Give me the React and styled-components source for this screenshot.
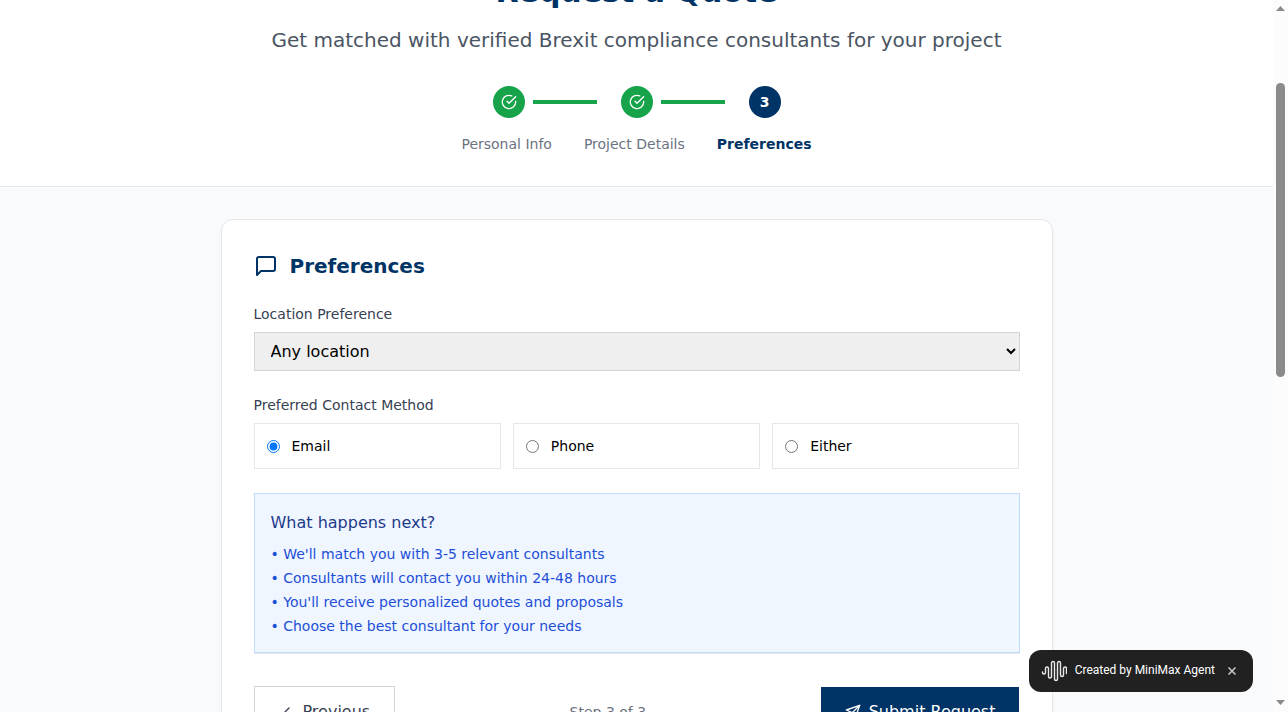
import React, { useState } from "react";
import styled, { createGlobalStyle } from "styled-components";

const GlobalStyle = createGlobalStyle`
  *, *::before, *::after { box-sizing: border-box; }
  body {
    margin: 0;
    background: #f9fafb;
    color: #000;
    font-family: "DejaVu Sans", sans-serif;
    font-size: 16px;
    line-height: 26px;
  }
  h1, h2, h3, p, ul { margin: 0; padding: 0; }
  ul { list-style: none; }
  button, select, input { font: inherit; }
`;

const Shell = styled.div`
  display: grid;
  grid-template-columns: minmax(0, 1fr) 15px;
  height: 100vh;
  overflow: hidden;
`;

const Viewport = styled.div`
  min-width: 0;
  overflow: hidden;
  background: #f9fafb;
`;

const Track = styled.div`
  display: flex;
  flex-direction: column;
  align-items: center;
  padding: 6px 0 7px;
  background: #fcfcfc;
`;

const Arrow = styled.svg`
  display: block;
  width: 9px;
  height: 5px;
  fill: #8b8b8b;
`;

const Rail = styled.div`
  flex: 1;
  width: 9px;
  padding: 72px 0;
`;

const Thumb = styled.div`
  height: 54%;
  border-radius: 5px;
  background: #8b8b8b;
`;

const Header = styled.header`
  margin-top: -58px;
  padding: 32px;
  background: #fff;
  border-bottom: 1px solid #e5e7eb;
  text-align: center;
`;

const Title = styled.h1`
  margin-bottom: 16px;
  color: #003366;
  font-size: 30px;
  line-height: 36px;
`;

const Subtitle = styled.p`
  color: #4b5563;
  font-size: 20px;
  line-height: 28px;
`;

const Steps = styled.div`
  display: flex;
  justify-content: center;
  gap: 16px;
  margin-top: 32px;
`;

const Step = styled.div`
  display: flex;
  align-items: center;
  gap: 8px;
  padding-right: ${(p) => (p.$last ? "0" : "8px")};
`;

const StepCircle = styled.span`
  display: flex;
  align-items: center;
  justify-content: center;
  width: 32px;
  height: 32px;
  border-radius: 50%;
  background: ${(p) => (p.$done ? "#16a34a" : "#003366")};
  color: #fff;
  font-size: 14px;
  line-height: 20px;
  font-weight: 700;
`;

const StepLine = styled.span`
  width: 64px;
  height: 4px;
  background: #16a34a;
`;

const StepLabels = styled.div`
  display: flex;
  justify-content: center;
  gap: 32px;
  margin-top: 16px;
`;

const StepLabel = styled.span`
  color: ${(p) => (p.$active ? "#003366" : "#6b7280")};
  font-size: 14px;
  line-height: 20px;
  font-weight: ${(p) => (p.$active ? 700 : 400)};
`;

const Main = styled.main`
  max-width: 896px;
  margin: 0 auto;
  padding: 32px;
`;

const Card = styled.form`
  display: flex;
  flex-direction: column;
  padding: 32px;
  background: #fff;
  border: 1px solid #e5e7eb;
  border-radius: 12px;
  box-shadow: 0 1px 2px rgba(0, 0, 0, 0.05);
`;

const CardTitle = styled.h2`
  display: flex;
  align-items: center;
  gap: 12px;
  margin-bottom: 24px;
  color: #003366;
  font-size: 20px;
  line-height: 28px;
`;

const Icon = styled.svg`
  display: block;
  flex: none;
  width: ${(p) => p.$size}px;
  height: ${(p) => p.$size}px;
  fill: none;
  stroke: currentColor;
  stroke-width: 2;
  stroke-linecap: round;
  stroke-linejoin: round;
`;

const Field = styled.div`
  margin-bottom: 24px;
`;

const Label = styled.label`
  display: block;
  margin-bottom: 8px;
  color: #374151;
  font-size: 14px;
  line-height: 20px;
`;

const Select = styled.select`
  display: block;
  width: 100%;
  padding: 8px 12px;
  background: #efefef;
  border: 1px solid #d1d5db;
  border-radius: 0;
  color: #000;
`;

const Options = styled.div`
  display: grid;
  grid-template-columns: repeat(3, minmax(0, 1fr));
  gap: 12px;
`;

const Option = styled.label`
  display: flex;
  align-items: center;
  gap: 12px;
  padding: 12px;
  border: 1px solid #e5e7eb;
  font-size: 14px;
  line-height: 20px;
  cursor: pointer;
`;

const Radio = styled.input`
  width: 13px;
  height: 13px;
  margin: 0;
`;

const Notice = styled.section`
  padding: 16px;
  background: #eff6ff;
  border: 1px solid #bfdbfe;
`;

const NoticeTitle = styled.h3`
  margin-bottom: 8px;
  color: #1e3a8a;
  font-size: 16px;
  line-height: 26px;
  font-weight: 400;
`;

const NoticeList = styled.ul`
  display: flex;
  flex-direction: column;
  gap: 4px;
  color: #1d4ed8;
  font-size: 14px;
  line-height: 20px;
`;

const Actions = styled.div`
  display: flex;
  align-items: center;
  justify-content: space-between;
  padding-top: 32px;
  border-top: 1px solid #e5e7eb;
`;

const Button = styled.button`
  display: flex;
  align-items: center;
  gap: 8px;
  padding: 12px 24px;
  border: ${(p) => (p.$primary ? "0" : "1px solid #d1d5db")};
  background: ${(p) => (p.$primary ? "#003366" : "#fff")};
  color: ${(p) => (p.$primary ? "#fff" : "#374151")};
  line-height: 26px;
  cursor: pointer;
`;

const StepCount = styled.span`
  color: #6b7280;
  font-size: 14px;
  line-height: 20px;
`;

const Badge = styled.aside`
  position: fixed;
  right: 35px;
  bottom: 20px;
  display: flex;
  align-items: center;
  gap: 8px;
  height: 42px;
  padding: 0 12px;
  border-radius: 12px;
  background: #212121;
  color: #fff;
  font-family: Roboto, sans-serif;
  font-size: 12px;
  line-height: 16px;
  white-space: nowrap;
`;

const BadgeText = styled.span`
  padding-bottom: 2px;
`;

const Wave = styled.svg`
  display: block;
  width: 26px;
  height: 22px;
  fill: none;
  stroke: #e8e8e8;
  stroke-width: 1.4;
  stroke-linecap: round;
`;

const CloseButton = styled.button`
  display: flex;
  align-items: center;
  justify-content: center;
  width: 18px;
  height: 18px;
  padding: 0;
  border: 0;
  background: transparent;
  color: #c4c4c4;
  cursor: pointer;
`;

const CloseIcon = styled(Icon)`
  stroke-width: 1.6;
  stroke-linecap: butt;
`;

const CheckIcon = () => (
  <Icon $size={16} viewBox="0 0 24 24" aria-hidden="true">
    <path d="M22 11.08V12a10 10 0 1 1-5.93-9.14" />
    <path d="m9 11 3 3L22 4" />
  </Icon>
);

const notes = [
  "We'll match you with 3-5 relevant consultants",
  "Consultants will contact you within 24-48 hours",
  "You'll receive personalized quotes and proposals",
  "Choose the best consultant for your needs",
];

export default function App() {
  const [contact, setContact] = useState("Email");
  const [badgeOpen, setBadgeOpen] = useState(true);

  return (
    <>
      <GlobalStyle />
      <Shell>
        <Viewport>
          <Header>
            <Title>Request a Quote</Title>
            <Subtitle>Get matched with verified Brexit compliance consultants for your project</Subtitle>
            <Steps>
              <Step>
                <StepCircle $done><CheckIcon /></StepCircle>
                <StepLine />
              </Step>
              <Step>
                <StepCircle $done><CheckIcon /></StepCircle>
                <StepLine />
              </Step>
              <Step $last>
                <StepCircle>3</StepCircle>
              </Step>
            </Steps>
            <StepLabels>
              <StepLabel>Personal Info</StepLabel>
              <StepLabel>Project Details</StepLabel>
              <StepLabel $active>Preferences</StepLabel>
            </StepLabels>
          </Header>
          <Main>
            <Card onSubmit={(e) => e.preventDefault()}>
              <CardTitle>
                <Icon $size={24} viewBox="0 0 24 24" aria-hidden="true">
                  <path d="M21 15a2 2 0 0 1-2 2H7l-4 4V5a2 2 0 0 1 2-2h14a2 2 0 0 1 2 2z" />
                </Icon>
                Preferences
              </CardTitle>
              <Field>
                <Label htmlFor="location">Location Preference</Label>
                <Select id="location" defaultValue="any">
                  <option value="any">Any location</option>
                </Select>
              </Field>
              <Field role="radiogroup" aria-labelledby="contact-label">
                <Label as="div" id="contact-label">Preferred Contact Method</Label>
                <Options>
                  {["Email", "Phone", "Either"].map((name) => (
                    <Option key={name}>
                      <Radio
                        type="radio"
                        name="contact"
                        value={name}
                        checked={contact === name}
                        onChange={() => setContact(name)}
                      />
                      {name}
                    </Option>
                  ))}
                </Options>
              </Field>
              <Notice>
                <NoticeTitle>What happens next?</NoticeTitle>
                <NoticeList>
                  {notes.map((note) => (
                    <li key={note}>• {note}</li>
                  ))}
                </NoticeList>
              </Notice>
              <Actions>
                <Button type="button">
                  <Icon $size={16} viewBox="0 0 24 24" aria-hidden="true">
                    <path d="m15 18-6-6 6-6" />
                  </Icon>
                  Previous
                </Button>
                <StepCount>Step 3 of 3</StepCount>
                <Button type="submit" $primary>
                  <Icon $size={16} viewBox="0 0 24 24" aria-hidden="true">
                    <path d="m22 2-7 20-4-9-9-4Z" />
                    <path d="M22 2 11 13" />
                  </Icon>
                  Submit Request
                </Button>
              </Actions>
            </Card>
          </Main>
        </Viewport>
        <Track aria-hidden="true">
          <Arrow viewBox="0 0 9 5"><path d="M0 5 4.5 0 9 5z" /></Arrow>
          <Rail><Thumb /></Rail>
          <Arrow viewBox="0 0 9 5"><path d="M0 0h9L4.5 5z" /></Arrow>
        </Track>
      </Shell>
      {badgeOpen && (
        <Badge>
          <Wave viewBox="0 0 26 22" aria-hidden="true">
            <path d="M1.500 12v.5a1.500 1.500 0 0 0 3 0V8.500a1.500 1.500 0 0 1 3 0v8a1.500 1.500 0 0 0 3 0V3a1.500 1.500 0 0 1 3 0v16a1.500 1.500 0 0 0 3 0V3a1.500 1.500 0 0 1 3 0v12a1.500 1.500 0 0 0 3 0V8.500a1.500 1.500 0 0 1 3 0v5" />
          </Wave>
          <BadgeText>Created by MiniMax Agent</BadgeText>
          <CloseButton type="button" aria-label="Close" onClick={() => setBadgeOpen(false)}>
            <CloseIcon $size={12} viewBox="0 0 12 12" aria-hidden="true">
              <path d="m2.500 2.500 7 7M9.500 2.500l-7 7" />
            </CloseIcon>
          </CloseButton>
        </Badge>
      )}
    </>
  );
}
